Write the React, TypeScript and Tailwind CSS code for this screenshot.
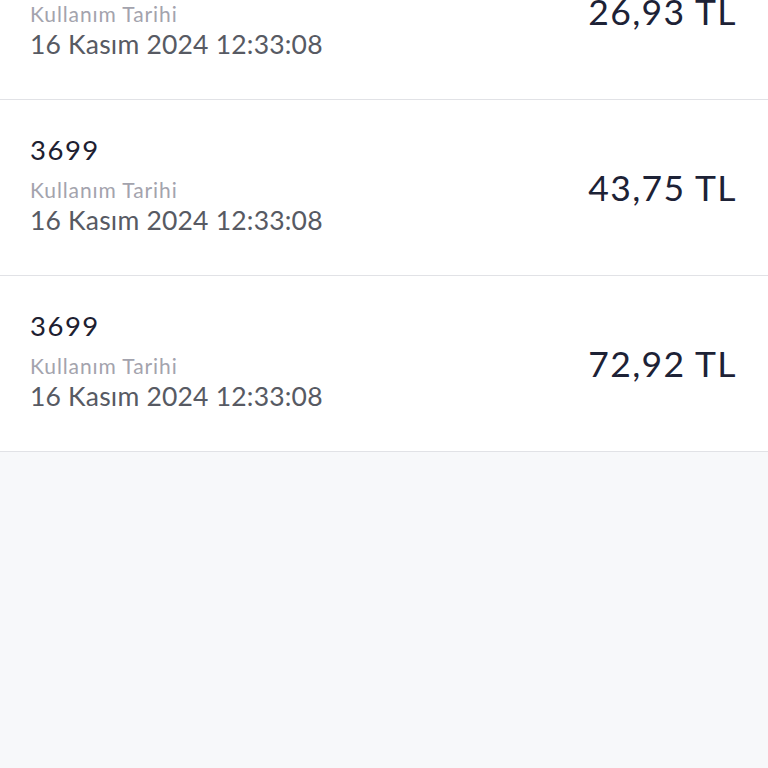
import React from "react";

const items = [
  { code: "3699", date: "16 Kasım 2024 12:33:08", amount: "26,93 TL" },
  { code: "3699", date: "16 Kasım 2024 12:33:08", amount: "43,75 TL" },
  { code: "3699", date: "16 Kasım 2024 12:33:08", amount: "72,92 TL" },
];

export default function App() {
  return (
    <div
      className="h-[768px] w-[768px] overflow-hidden bg-[#f7f8fa]"
      style={{ fontFamily: "Lato, 'Noto Sans', sans-serif" }}
    >
      <div className="-mt-[76px]">
        {items.map((it, i) => (
          <div
            key={i}
            className="flex items-center justify-between border-b border-[#e1e2e6] bg-white pl-[30px] pr-[31px] pt-[32px] pb-[39px]"
          >
            <div className="flex flex-col">
              <div className="text-[27.5px] leading-[36px] tracking-[1.5px] text-[#1d2031]">{it.code}</div>
              <div className="mt-[8px] text-[21px] leading-[28px] tracking-[0.9px] text-[#a3a3ad]">Kullanım Tarihi</div>
              <div className="text-[26.5px] leading-[32px] tracking-[0.2px] text-[#575a63]">{it.date}</div>
            </div>
            <div className="mt-[8px] text-[35.5px] leading-[40px] tracking-[1.4px] text-[#1d2236]">{it.amount}</div>
          </div>
        ))}
      </div>
    </div>
  );
}
